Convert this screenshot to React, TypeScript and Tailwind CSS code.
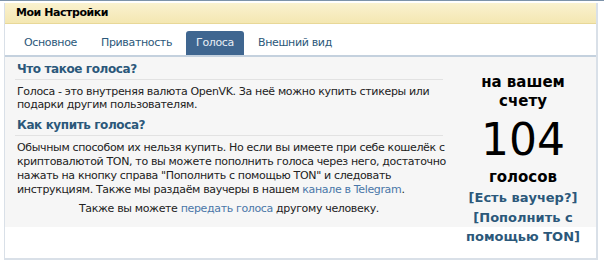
import React from "react"

const tabs = ["Основное", "Приватность", "Голоса", "Внешний вид"]

export default function App() {
  return (
    <div className="w-[604px] h-[266px] bg-white overflow-hidden text-[11px] text-black tracking-[-0.35px]" style={{ fontFamily: '"DejaVu Sans", Verdana, sans-serif' }}>
      {/* top rule */}
      <div className="h-[1px] bg-[#7d93a9]" />
      <div className="mt-[2px] ml-[4px] w-[594px] h-[257px] border-l border-r-2 border-b-2 border-[#d9e0e8] bg-white flex flex-col">
        {/* Header */}
        <div className="h-[21px] shrink-0 flex items-center pl-[11px] bg-gradient-to-b from-[#faf2cf] to-[#f4e7b2] border-b border-[#e8d898] font-bold text-[11px] tracking-[-0.45px]">
          Мои Настройки
        </div>

        {/* Tabs */}
        <div className="h-[33px] shrink-0 flex items-end pl-[9px] gap-[4px] border-b-2 border-[#c4d1de]">
          {tabs.map((t) => (
            <div
              key={t}
              className={
                t === "Голоса"
                  ? "h-[24px] px-[10px] flex items-center rounded-t-[3px] bg-[#3f6690] text-[#e8eef5]"
                  : "h-[24px] px-[10px] flex items-center text-[#2b587a]"
              }
            >
              {t}
            </div>
          ))}
        </div>

        {/* Content */}
        <div className="h-[170px] shrink-0 bg-[#f6f6f6] flex">
          <div className="ml-[10px] w-[428px] pt-[3px] whitespace-nowrap">
            <div className="pl-[2px] h-[18px] flex items-center font-bold text-[12px] tracking-[-0.4px] text-[#2b587a]">Что такое голоса?</div>
            <div className="mt-[1px] h-px bg-[#e2e2e2]" />
            <div className="pl-[2px] pt-[5px] leading-[13px] text-[#222]">
              Голоса - это внутреняя валюта OpenVK. За неё можно купить стикеры или
              <br />
              подарки другим пользователям.
            </div>
            <div className="mt-[5px] pl-[2px] h-[18px] flex items-center font-bold text-[12px] tracking-[-0.4px] text-[#2b587a]">Как купить голоса?</div>
            <div className="mt-[1px] h-px bg-[#e2e2e2]" />
            <div className="pl-[2px] pt-[5px] leading-[14px] text-[#222]">
              Обычным способом их нельзя купить. Но если вы имеете при себе кошелёк с
              <br />
              криптовалютой TON, то вы можете пополнить голоса через него, достаточно
              <br />
              нажать на кнопку справа "Пополнить с помощью TON" и следовать
              <br />
              инструкциям. Также мы раздаём ваучеры в нашем <a className="text-[#4a76a8]">канале в Telegram</a>.
            </div>
            <div className="mt-[4px] text-center text-[#222]">
              Также вы можете <a className="text-[#4a76a8]">передать голоса</a> другому человеку.
            </div>
          </div>
          <div className="ml-[20px] w-[120px] pt-[16px] flex flex-col items-center text-center tracking-normal">
            <div className="font-bold text-[15px] leading-[19px]">на вашем счету</div>
            <div className="text-[44px] leading-[52px] mt-[3px]">104</div>
            <div className="font-bold text-[15px] leading-[19px] mt-[2px]">голосов</div>
            <a className="font-bold text-[13px] leading-[20px] text-[#2b587a] mt-[1px]">[Есть ваучер?]</a>
            <a className="font-bold text-[13px] leading-[19px] text-[#2b587a]">[Пополнить с помощью TON]</a>
          </div>
        </div>
      </div>
    </div>
  )
}
